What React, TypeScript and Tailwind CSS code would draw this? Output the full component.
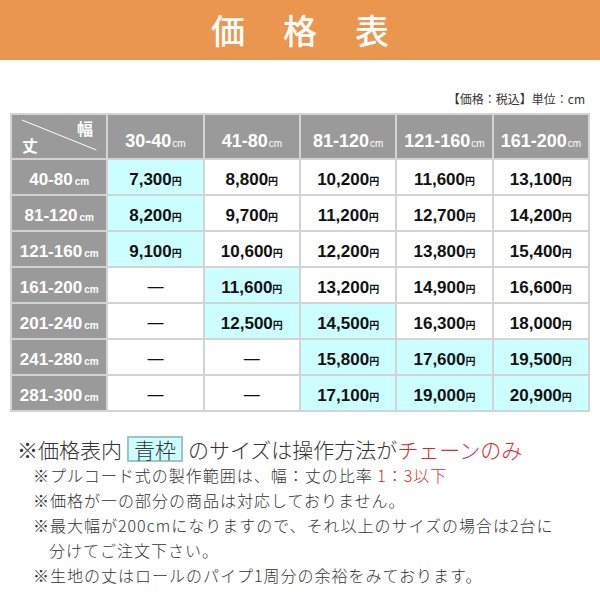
import React from 'react';

const FONT_NUM = 'font-["Liberation_Sans","Noto_Sans_CJK_JP",sans-serif]';
const FONT_JP = 'font-["Noto_Sans_CJK_JP",sans-serif]';

const widths = ['30-40', '41-80', '81-120', '121-160', '161-200'];

type Cell = { price: string | null; blue?: boolean };

const rows: { label: string; cells: Cell[] }[] = [
  {
    label: '40-80',
    cells: [
      { price: '7,300', blue: true },
      { price: '8,800' },
      { price: '10,200' },
      { price: '11,600' },
      { price: '13,100' },
    ],
  },
  {
    label: '81-120',
    cells: [
      { price: '8,200', blue: true },
      { price: '9,700' },
      { price: '11,200' },
      { price: '12,700' },
      { price: '14,200' },
    ],
  },
  {
    label: '121-160',
    cells: [
      { price: '9,100', blue: true },
      { price: '10,600' },
      { price: '12,200' },
      { price: '13,800' },
      { price: '15,400' },
    ],
  },
  {
    label: '161-200',
    cells: [
      { price: null },
      { price: '11,600', blue: true },
      { price: '13,200' },
      { price: '14,900' },
      { price: '16,600' },
    ],
  },
  {
    label: '201-240',
    cells: [
      { price: null },
      { price: '12,500', blue: true },
      { price: '14,500', blue: true },
      { price: '16,300' },
      { price: '18,000' },
    ],
  },
  {
    label: '241-280',
    cells: [
      { price: null },
      { price: null },
      { price: '15,800', blue: true },
      { price: '17,600', blue: true },
      { price: '19,500', blue: true },
    ],
  },
  {
    label: '281-300',
    cells: [
      { price: null },
      { price: null },
      { price: '17,100', blue: true },
      { price: '19,000', blue: true },
      { price: '20,900', blue: true },
    ],
  },
];

function CornerCell() {
  return (
    <div className="relative h-[43px] bg-[#9a9a9a] text-white font-bold text-[16px] leading-none">
      <svg className="absolute inset-0" width="100%" height="100%" viewBox="0 0 95 43" preserveAspectRatio="none">
        <line x1="10" y1="5" x2="85" y2="35" stroke="#ffffff" strokeWidth="1" />
      </svg>
      <span className={`absolute left-[10px] top-[22px] ${FONT_JP}`}>丈</span>
      <span className={`absolute left-[65px] top-[5px] ${FONT_JP}`}>幅</span>
    </div>
  );
}

export default function App() {
  return (
    <div className="w-[600px] h-[600px] bg-white overflow-hidden">
      <div className="h-[60px] bg-[#ea964f] flex items-center justify-center">
        <h1 className={`${FONT_JP} text-white text-[34px] font-medium tracking-[38px] pl-[38px] leading-none`}>
          価格表
        </h1>
      </div>

      <div className={`${FONT_JP} text-[12px] text-[#333] text-right pr-[15px] mt-[33px] leading-none`}>
        【価格：税込】単位：cm
      </div>

      <div className={`mx-[10px] mt-[8px] grid grid-cols-6 gap-[2px] p-[2px] bg-[#d3d3d3] ${FONT_NUM}`}>
        <CornerCell />
        {widths.map((w) => (
          <div
            key={w}
            className="h-[43px] bg-[#9a9a9a] text-white font-bold text-[18px] flex items-baseline justify-center pt-[13px]"
          >
            {w}
            <span className="text-[10px] font-normal ml-[1px]">cm</span>
          </div>
        ))}
        {rows.map((r) => (
          <React.Fragment key={r.label}>
            <div className="h-[34px] bg-[#9a9a9a] text-white font-bold text-[17px] flex items-baseline justify-center pt-[7px]">
              {r.label}
              <span className="text-[10px] ml-[2px]">cm</span>
            </div>
            {r.cells.map((c, i) => (
              <div
                key={i}
                className={`h-[34px] flex items-baseline justify-center pt-[7px] text-[#111] font-bold text-[17px] ${
                  c.blue ? 'bg-[#ccffff]' : 'bg-white'
                }`}
              >
                {c.price ? (
                  <>
                    {c.price}
                    <span className={`text-[10px] ${FONT_JP}`}>円</span>
                  </>
                ) : (
                  <span className="font-normal text-[16px]">—</span>
                )}
              </div>
            ))}
          </React.Fragment>
        ))}
      </div>

      <div className={`${FONT_JP} text-[#333] font-light mt-[24px] pl-[17px]`}>
        <p className="text-[21px] leading-[26px] flex items-center">
          ※価格表内
          <span className="mx-[5px] px-[5px] bg-[#ccffff] border-2 border-[#9cc4c4] leading-[22px]">青枠</span>
          のサイズは操作方法が<span className="text-[#d42a2a]">チェーンのみ</span>
        </p>
        <div className="pl-[16px] text-[16px] tracking-[1px] leading-[25px] mt-[1px]">
          <p>
            ※プルコード式の製作範囲は、幅：丈の比率 <span className="text-[#d42a2a]">1：3以下</span>
          </p>
          <p>※価格が一の部分の商品は対応しておりません。</p>
          <p>※最大幅が200cmになりますので、それ以上のサイズの場合は2台に</p>
          <p className="pl-[16px]">分けてご注文下さい。</p>
          <p>※生地の丈はロールのパイプ1周分の余裕をみております。</p>
        </div>
      </div>
    </div>
  );
}
